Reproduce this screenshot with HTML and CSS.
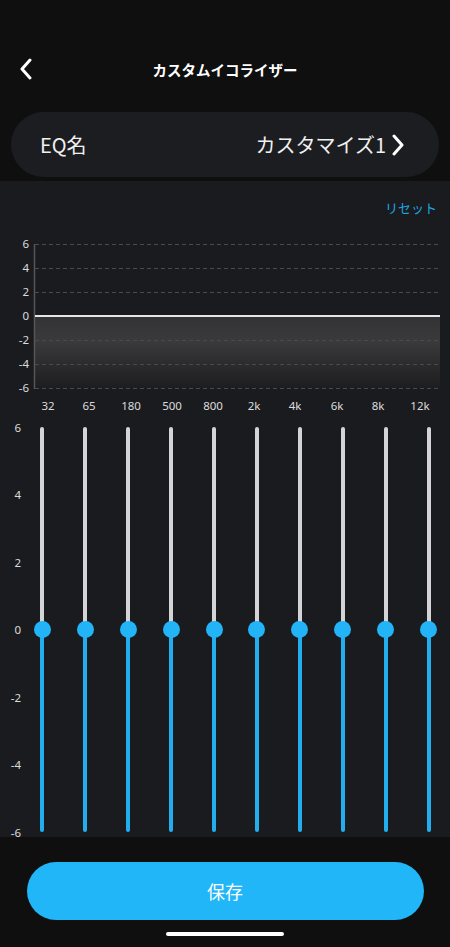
FILE: index.html
```html
<!DOCTYPE html>
<html lang="ja">
<head>
    <meta charset="UTF-8">
    <meta name="viewport" content="width=device-width, initial-scale=1.0">
    <title>カスタムイコライザー</title>
    <link rel="stylesheet" href="styles.css">
</head>
<body>
    <div class="header">
        <svg class="back" width="14" height="22" viewBox="0 0 14 22">
            <polyline points="11,2 3,11 11,20" fill="none" stroke="#fff" stroke-width="3" stroke-linecap="round" stroke-linejoin="round"/>
        </svg>
        <div class="title">カスタムイコライザー</div>
    </div>

    <div class="name-card">
        <span class="name-label">EQ名</span>
        <span class="name-value">カスタマイズ1
            <svg width="14" height="22" viewBox="0 0 14 22">
                <polyline points="3,2 11,11 3,20" fill="none" stroke="#fff" stroke-width="3" stroke-linecap="round" stroke-linejoin="round"/>
            </svg>
        </span>
    </div>

    <div class="panel">
        <div class="reset-row"><span class="reset">リセット</span></div>

        <svg class="chart" width="450" height="180" viewBox="0 0 450 180">
            <defs>
                <linearGradient id="fill" x1="0" y1="0" x2="0" y2="1">
                    <stop offset="0" stop-color="#333336"/>
                    <stop offset="0.35" stop-color="#3a3a3d"/>
                    <stop offset="1" stop-color="#1d1d20"/>
                </linearGradient>
            </defs>
            <rect x="35" y="80" width="405" height="72" fill="url(#fill)"/>
            <g stroke="#4a4a4e" stroke-width="1" stroke-dasharray="4 3">
                <line x1="35" y1="8.5" x2="440" y2="8.5"/>
                <line x1="35" y1="32.5" x2="440" y2="32.5"/>
                <line x1="35" y1="56.5" x2="440" y2="56.5"/>
                <line x1="35" y1="104.5" x2="440" y2="104.5"/>
                <line x1="35" y1="128.5" x2="440" y2="128.5"/>
                <line x1="35" y1="152.5" x2="440" y2="152.5"/>
            </g>
            <line x1="34.5" y1="8" x2="34.5" y2="153" stroke="#55565a" stroke-width="1.5"/>
            <line x1="35" y1="80" x2="440" y2="80" stroke="#e6e6e6" stroke-width="2"/>
            <g class="axis" text-anchor="end">
                <text x="29" y="12">6</text>
                <text x="29" y="36">4</text>
                <text x="29" y="60">2</text>
                <text x="29" y="84">0</text>
                <text x="29" y="108">-2</text>
                <text x="29" y="132">-4</text>
                <text x="29" y="156">-6</text>
            </g>
            <g class="axis" text-anchor="middle">
                <text x="48" y="174">32</text>
                <text x="89" y="174">65</text>
                <text x="131" y="174">180</text>
                <text x="172" y="174">500</text>
                <text x="213" y="174">800</text>
                <text x="254" y="174">2k</text>
                <text x="295" y="174">4k</text>
                <text x="337" y="174">6k</text>
                <text x="378" y="174">8k</text>
                <text x="420" y="174">12k</text>
            </g>
        </svg>

        <div class="sliders">
            <div class="ylabels">
                <span>6</span>
                <span>4</span>
                <span>2</span>
                <span>0</span>
                <span>-2</span>
                <span>-4</span>
                <span>-6</span>
            </div>
            <div class="band"><div class="track"><div class="upper"></div><div class="thumb"></div><div class="lower"></div></div></div>
            <div class="band"><div class="track"><div class="upper"></div><div class="thumb"></div><div class="lower"></div></div></div>
            <div class="band"><div class="track"><div class="upper"></div><div class="thumb"></div><div class="lower"></div></div></div>
            <div class="band"><div class="track"><div class="upper"></div><div class="thumb"></div><div class="lower"></div></div></div>
            <div class="band"><div class="track"><div class="upper"></div><div class="thumb"></div><div class="lower"></div></div></div>
            <div class="band"><div class="track"><div class="upper"></div><div class="thumb"></div><div class="lower"></div></div></div>
            <div class="band"><div class="track"><div class="upper"></div><div class="thumb"></div><div class="lower"></div></div></div>
            <div class="band"><div class="track"><div class="upper"></div><div class="thumb"></div><div class="lower"></div></div></div>
            <div class="band"><div class="track"><div class="upper"></div><div class="thumb"></div><div class="lower"></div></div></div>
            <div class="band"><div class="track"><div class="upper"></div><div class="thumb"></div><div class="lower"></div></div></div>
        </div>
    </div>

    <div class="footer">
        <button class="save">保存</button>
        <div class="home-bar"></div>
    </div>
</body>
</html>
```

FILE: styles.css
```css
body {
    margin: 0;
    width: 450px;
    height: 947px;
    overflow: hidden;
    background-color: #0f0f10;
    color: #fff;
    font-family: "Noto Sans", "Noto Sans CJK JP", sans-serif;
}
.header {
    margin-top: 48px;
    height: 42px;
    display: flex;
    align-items: center;
    position: relative;
}
.back {
    margin-left: 19px;
}
.title {
    position: absolute;
    left: 0;
    right: 0;
    text-align: center;
    font-family: "Noto Sans CJK JP", sans-serif;
    font-size: 14.5px;
    font-weight: bold;
}
.name-card {
    margin: 22px 11px 0 11px;
    height: 65px;
    border-radius: 33px;
    background-color: #1c1d21;
    display: flex;
    align-items: center;
    justify-content: space-between;
    padding: 0 34px 0 29px;
    font-family: "Noto Sans CJK JP", sans-serif;
    font-size: 20px;
    color: #f0f0f0;
}
.name-value {
    display: flex;
    align-items: center;
    gap: 5px;
}
.panel {
    margin-top: 4px;
    height: 656px;
    box-sizing: border-box;
    padding-top: 17px;
    background-color: #1a1b1e;
}
.reset-row {
    height: 18px;
    display: flex;
    justify-content: flex-end;
    align-items: center;
    padding-right: 13px;
}
.reset {
    font-family: "Noto Sans CJK JP", sans-serif;
    font-size: 13px;
    color: #1ea5e2;
}
.chart {
    display: block;
    margin-top: 20px;
}
.axis {
    font-size: 11.5px;
    fill: #dcdcdc;
}
.sliders {
    margin-top: 11px;
    height: 405px;
    display: grid;
    grid-template-columns: 21px repeat(10, 1fr);
}
.ylabels {
    display: flex;
    flex-direction: column;
    justify-content: space-between;
    font-size: 11.5px;
    color: #dcdcdc;
}
.ylabels span {
    height: 0;
    display: flex;
    align-items: center;
    justify-content: flex-end;
}
.band {
    display: flex;
    justify-content: center;
}
.track {
    width: 4px;
    display: flex;
    flex-direction: column;
    align-items: center;
}
.upper {
    flex: 1;
    width: 4px;
    background-color: #d4d4d6;
    border-radius: 2px 2px 0 0;
}
.lower {
    flex: 1;
    width: 4px;
    background-color: #22aeee;
    border-radius: 0 0 2px 2px;
}
.thumb {
    width: 17px;
    height: 17px;
    margin: -8px 0;
    border-radius: 50%;
    background-color: #22b4f7;
    position: relative;
}
.footer {
    display: flex;
    flex-direction: column;
    align-items: center;
}
.save {
    margin-top: 25px;
    width: 397px;
    height: 58px;
    border: none;
    border-radius: 29px;
    background-color: #20b6f8;
    color: #fff;
    font-family: "Noto Sans CJK JP", sans-serif;
    font-size: 18px;
}
.home-bar {
    margin-top: 12px;
    width: 118px;
    height: 4px;
    border-radius: 2px;
    background-color: #fff;
}
```
